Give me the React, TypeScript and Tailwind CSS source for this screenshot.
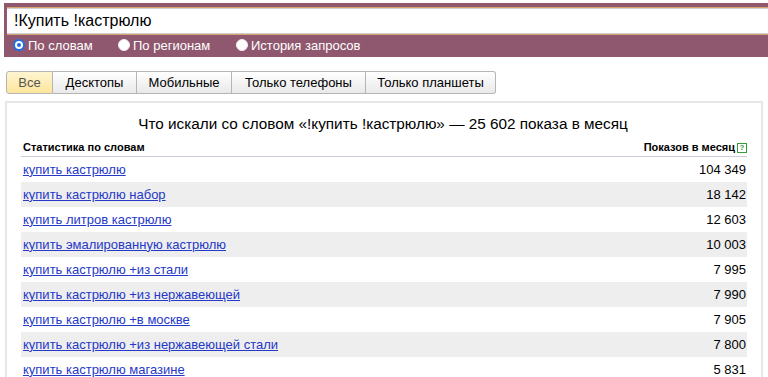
import React from "react";

const rows: [string, string][] = [
  ["купить кастрюлю", "104 349"],
  ["купить кастрюлю набор", "18 142"],
  ["купить литров кастрюлю", "12 603"],
  ["купить эмалированную кастрюлю", "10 003"],
  ["купить кастрюлю +из стали", "7 995"],
  ["купить кастрюлю +из нержавеющей", "7 990"],
  ["купить кастрюлю +в москве", "7 905"],
  ["купить кастрюлю +из нержавеющей стали", "7 800"],
  ["купить кастрюлю магазине", "5 831"],
];

const tabs = ["Все", "Десктопы", "Мобильные", "Только телефоны", "Только планшеты"];
const tabW = [47, 84, 95, 134, 130];

function Radio({ checked, label, w }: { checked?: boolean; label: string; w: number }) {
  return (
    <div className="flex items-center" style={{ width: w }}>
      {checked ? (
        <span className="w-[12px] h-[12px] rounded-full border-[2px] border-[#1f6fe0] bg-white flex items-center justify-center">
          <span className="w-[4px] h-[4px] rounded-full bg-[#1f6fe0]" />
        </span>
      ) : (
        <span className="w-[12px] h-[12px] rounded-full bg-white border border-[#f0f0f0]" />
      )}
      <span className="ml-[3px] text-[13px] text-white leading-none">{label}</span>
    </div>
  );
}

export default function App() {
  return (
    <div
      className="w-[768px] h-[377px] overflow-hidden bg-white"
      style={{ fontFamily: '"Liberation Sans", Arial, sans-serif' }}
    >
      <div className="pt-[3px] pl-[4px]">
        <div className="bg-[#8f586e] h-[54px] pt-[4px] pl-[3px]">
          <div className="h-[28px] border-y border-[#d3a46c] bg-white">
            <div className="h-full border-y border-[#cfcfcf] flex items-center pl-[7px]">
              <span className="text-[16px] text-black leading-none">!Купить !кастрюлю</span>
            </div>
          </div>
          <div className="flex items-center h-[20px] pl-[6px]">
            <Radio checked label="По словам" w={105} />
            <Radio label="По регионам" w={118} />
            <Radio label="История запросов" w={150} />
          </div>
        </div>
      </div>

      <div className="flex mt-[14px] ml-[6px] h-[23px]">
        {tabs.map((t, i) => (
          <div
            key={t}
            style={{ width: tabW[i] }}
            className={
              "flex items-center justify-center text-[13px] border-y border-r border-[#b5b5b5] " +
              (i === 0
                ? "border-l rounded-l-[3px] bg-gradient-to-b from-[#fff6d0] to-[#fce49c] text-[#555]"
                : "bg-gradient-to-b from-white to-[#e9e9e9] text-black") +
              (i === tabs.length - 1 ? " rounded-r-[3px]" : "")
            }
          >
            {t}
          </div>
        ))}
      </div>

      <div className="mt-[7px] ml-[5px] w-[758px] border-[2px] border-[#e6e6e6] pl-[14px] pr-[14px] pt-[11px]">
        <div className="text-center text-[15.3px] text-black leading-[20px] pr-[2px]">
          Что искали со словом «!купить !кастрюлю» — 25 602 показа в месяц
        </div>
        <div className="flex items-end justify-between h-[23px] border-b border-[#cccbd8] pl-[2px] pb-[3px]">
          <span className="text-[11px] font-bold text-black leading-none">Статистика по словам</span>
          <span className="flex items-center text-[11px] font-bold text-black leading-none">
            Показов в месяц
            <span className="ml-[2px] w-[10px] h-[10px] border border-[#3a9a3a] text-[#3a9a3a] text-[8px] leading-[8px] flex items-center justify-center font-bold">
              ?
            </span>
          </span>
        </div>
        {rows.map(([k, v], i) => (
          <div
            key={k}
            className={
              "flex items-center justify-between h-[25px] pl-[2px] pr-[1px] text-[13px] " +
              (i % 2 === 1 ? "bg-[#eeeeee]" : "")
            }
          >
            <a className="text-[#2538c8] underline">{k}</a>
            <span className="text-black">{v}</span>
          </div>
        ))}
      </div>
    </div>
  );
}
